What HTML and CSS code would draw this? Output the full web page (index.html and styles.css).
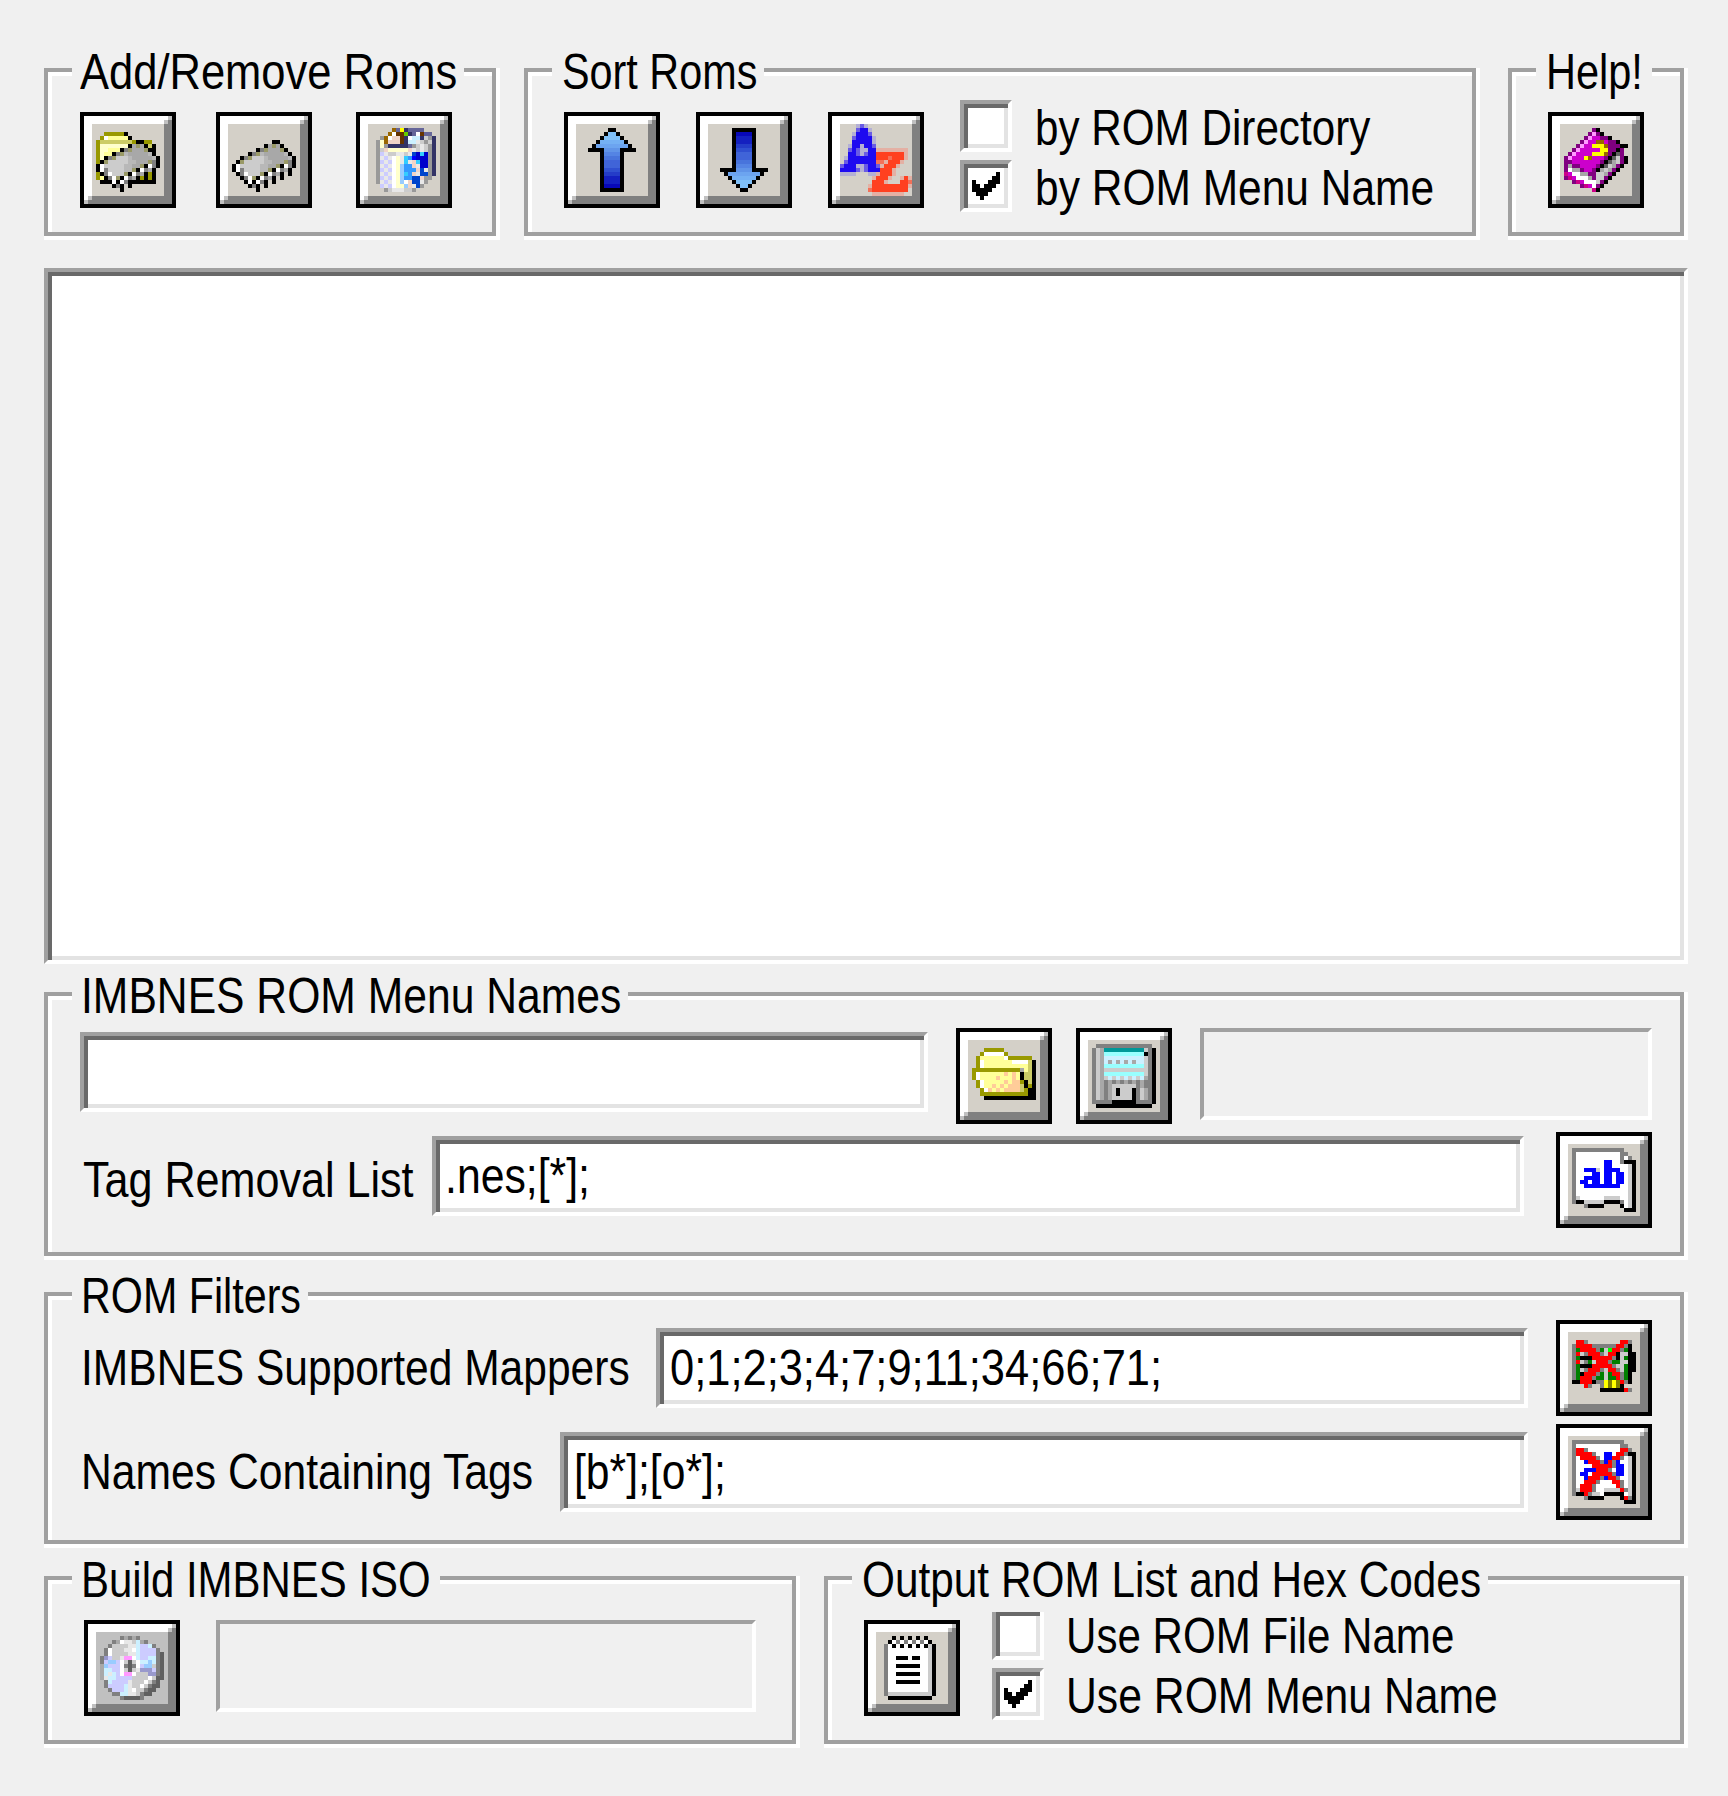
FILE: index.html
```html
<!DOCTYPE html>
<html lang="en">
<head>
<meta charset="utf-8">
<title>IMBNES ROM Builder</title>
<link rel="stylesheet" href="styles.css">
</head>
<body>
<main class="window">
  <div class="row top-row">
    <section class="group group-add">
      <h2 class="legend legend-add"><span class="t t-add">Add/Remove Roms</span></h2>
      <div class="tools tools-add">
        <button class="btn"><svg data-icon="folderChip"></svg></button>
        <button class="btn"><svg data-icon="chip"></svg></button>
        <button class="btn"><svg data-icon="trash"></svg></button>
      </div>
    </section>
    <section class="group group-sort">
      <h2 class="legend legend-sort"><span class="t t-sort">Sort Roms</span></h2>
      <div class="tools tools-sort">
        <button class="btn"><svg data-icon="up"></svg></button>
        <button class="btn"><svg data-icon="down"></svg></button>
        <button class="btn"><svg data-icon="az"></svg></button>
        <div class="checks">
          <label class="check"><span class="box"></span><span class="t t-dir">by ROM Directory</span></label>
          <label class="check"><span class="box"><svg class="tick" viewBox="0 0 7 7"><path d="M6 0h1v3h-1v1h-1v1h-1v1h-1v1h-1v-1h-1v-1h-1v-3h1v1h1v1h1v-1h1v-1h1v-1h1z"/></svg></span><span class="t t-menu">by ROM Menu Name</span></label>
        </div>
      </div>
    </section>
    <section class="group group-help">
      <h2 class="legend legend-help"><span class="t t-help">Help!</span></h2>
      <div class="tools">
        <button class="btn"><svg data-icon="book"></svg></button>
      </div>
    </section>
  </div>

  <div class="list sunken"></div>

  <section class="group group-names">
    <h2 class="legend legend-names"><span class="t t-names">IMBNES ROM Menu Names</span></h2>
    <div class="line line-name">
      <div class="field field-name sunken"></div>
      <button class="btn"><svg data-icon="folder"></svg></button>
      <button class="btn btn-save"><svg data-icon="disk"></svg></button>
      <div class="status status-name"></div>
    </div>
    <div class="line line-tag">
      <div class="label label-tag"><span class="t t-tag">Tag Removal List</span></div>
      <div class="field field-tag sunken"><span class="t t-f1">.nes;[*];</span></div>
      <button class="btn"><svg data-icon="ab"></svg></button>
    </div>
  </section>

  <section class="group group-filters">
    <h2 class="legend legend-filters"><span class="t t-filters">ROM Filters</span></h2>
    <div class="line">
      <div class="label label-mappers"><span class="t t-mappers">IMBNES Supported Mappers</span></div>
      <div class="field sunken"><span class="t t-f2">0;1;2;3;4;7;9;11;34;66;71;</span></div>
      <button class="btn"><svg data-icon="board"></svg></button>
    </div>
    <div class="line">
      <div class="label label-tags"><span class="t t-tags">Names Containing Tags</span></div>
      <div class="field sunken"><span class="t t-f3">[b*];[o*];</span></div>
      <button class="btn"><svg data-icon="abx"></svg></button>
    </div>
  </section>

  <div class="row bottom-row">
    <section class="group group-build">
      <h2 class="legend legend-build"><span class="t t-build">Build IMBNES ISO</span></h2>
      <div class="tools tools-build">
        <button class="btn"><svg data-icon="cd" data-face="#c0c0c0"></svg></button>
        <div class="status status-build"></div>
      </div>
    </section>
    <section class="group group-output">
      <h2 class="legend legend-output"><span class="t t-output">Output ROM List and Hex Codes</span></h2>
      <div class="tools tools-output">
        <button class="btn"><svg data-icon="notepad"></svg></button>
        <div class="checks">
          <label class="check"><span class="box box-cut"></span><span class="t t-file">Use ROM File Name</span></label>
          <label class="check"><span class="box"><svg class="tick" viewBox="0 0 7 7"><path d="M6 0h1v3h-1v1h-1v1h-1v1h-1v1h-1v-1h-1v-1h-1v-3h1v1h1v1h1v-1h1v-1h1v-1h1z"/></svg></span><span class="t t-usemenu">Use ROM Menu Name</span></label>
        </div>
      </div>
    </section>
  </div>
</main>
<script src="icons.js"></script>
</body>
</html>
```
FILE: styles.css
```css
* { box-sizing: border-box; }
body { margin: 0; background: #f0f0f0; color: #000; }
.window {
  width: 1728px; height: 1796px; padding: 68px 40px 0 44px; background: #f0f0f0;
  font-family: "Liberation Sans", Arial, sans-serif;
  font-size: 50px; line-height: 48px; overflow: hidden;
}

/* condensed captions */
.t { display: block; width: max-content; white-space: nowrap; transform-origin: 0 0; }
.t-add { transform: scaleX(.87); }
.t-sort { transform: scaleX(.827); }
.t-help { transform: scaleX(.83); }
.t-dir { transform: scaleX(.844); }
.t-menu { transform: scaleX(.85); }
.t-names { transform: scaleX(.853); }
.t-tag { transform: scaleX(.862); }
.t-f1 { transform: scaleX(.855); }
.t-filters { transform: scaleX(.825); }
.t-mappers { transform: scaleX(.851); }
.t-f2 { transform: scaleX(.869); }
.t-tags { transform: scaleX(.853); }
.t-f3 { transform: scaleX(.853); }
.t-build { transform: scaleX(.839); }
.t-output { transform: scaleX(.847); }
.t-file { transform: scaleX(.842); }
.t-usemenu { transform: scaleX(.854); }

.row { display: flex; }

/* etched group frame */
.group {
  border: 4px solid #a0a0a0;
  box-shadow: 4px 0 #fff, 0 4px #fff, 4px 4px #fff, inset 4px 4px #fff;
}
.legend {
  margin: -24px 0 0 24px; height: 44px; padding-left: 9px;
  background: #f0f0f0; font-size: inherit; font-weight: 400;
}
.top-row { gap: 28px; height: 168px; }
.group-add { flex: none; width: 452px; }
.group-sort { flex: none; width: 952px; }
.group-help { flex: none; width: 176px; margin-left: 4px; }
.legend-add { width: 392px; padding-left: 8px; }
.legend-sort { width: 212px; padding-left: 10px; }
.legend-help { width: 116px; padding-left: 10px; }
.legend-names { width: 556px; }
.legend-filters { width: 236px; }
.legend-build { width: 368px; }
.legend-output { width: 636px; padding-left: 10px; }

.tools { display: flex; padding: 20px 0 0 36px; }
.tools-add { padding-left: 32px; gap: 40px; }
.tools-add .btn:last-child { margin-left: 4px; }
.tools-sort { gap: 36px; }
.tools-build { gap: 36px; }
.tools-output { gap: 32px; }

.btn { flex: none; width: 96px; height: 96px; padding: 0; border: 0; background: none; }
.btn svg { display: block; width: 96px; height: 96px; }

.checks { display: flex; flex-direction: column; gap: 8px; margin-top: -12px; }
.check { display: flex; gap: 23px; height: 52px; }
.tools-output .check { gap: 22px; }
.check .t { margin-top: 4px; }
.box {
  flex: none; width: 52px; height: 52px; padding: 4px; background: #fff;
  border: 4px solid; border-color: #a0a0a0 #fff #fff #a0a0a0;
  box-shadow: inset 4px 4px #696969, inset -4px -4px #e3e3e3;
}
.box-cut { clip-path: inset(4px 0 0 0); }
.tick { display: block; width: 28px; height: 28px; margin: 4px 0 0 4px; }

.sunken {
  border: 4px solid; border-color: #a0a0a0 #fff #fff #a0a0a0; background: #fff;
  box-shadow: inset 4px 4px #696969, inset -4px -4px #e3e3e3;
}
.list { width: 1644px; height: 696px; margin-top: 32px; }

.group-names { width: 1640px; height: 264px; margin-top: 28px; }
.group-filters { width: 1640px; height: 252px; margin-top: 36px; }
.line { display: flex; height: 96px; margin-bottom: 8px; padding: 0 28px 0 32px; }
.line-name { margin-top: 12px; }
.group-filters .legend { margin-bottom: 4px; }
.field { flex: 1; height: 80px; margin: 8px 28px 0 0; padding: 0 0 0 10px; line-height: 72px; }
.line-name .field, .line-tag .field { margin-top: 4px; }
.line-name .field-name { flex: none; width: 848px; }
.line-tag .field { margin-right: 32px; padding-left: 9px; }
.btn-save { margin-left: 24px; }
.label { flex: none; margin-top: 24px; padding-left: 1px; }
.label-tag { width: 352px; padding-left: 3px; }
.label-mappers { width: 576px; }
.label-tags { width: 480px; }
.status { border: 4px solid; border-color: #a0a0a0 #fff #fff #a0a0a0; height: 92px; }
.status-name { flex: 1; margin-left: 28px; }
.status-build { width: 540px; }

.bottom-row { margin-top: 32px; gap: 28px; height: 168px; }
.group-build { flex: none; width: 752px; }
.group-output { flex: none; width: 860px; }
```
FILE: icons.js
```js
// Toolbar icons as pixel maps. Each icon is 18x18 cells on a 24x24 button.
const palette = {
  K: '#000', w: '#fff', e: '#e8e8e8', l: '#ccc', m: '#b8b8b8', g: '#a8a8a8', d: '#808080', D: '#606060',
  o: '#999966', O: '#999900', c: '#cccc66', y: '#ffff99', Y: '#ffffcc', n: '#333366', s: '#9999cc',
  b: '#996600', B: '#663300', G: '#66cc00', p: '#f0d4c8', v: '#ccccff', a: '#3399ff', L: '#99ccff',
  C: '#33ccff', u: '#0000cc', U: '#0000ff', r: '#ff0000', F: '#008000', t: '#009999', T: '#99ffff',
  q: '#ccf0ff', P: '#cc00cc', M: '#800080', Q: '#ff99ff', R: '#cc0088', z: '#ffcc99', f: '#0044cc',
  x: '#ffff00', X: '#808000', Z: '#00ff00', S: '#666699', k: '#999999',
  h: '#1e0af0', i: '#6a5ce4', j: '#b4b0d4', H: '#ff4020', I: '#f47058', J: '#e4b0a4',
  0: '#80c0f8', 1: '#74b0f4', 2: '#6ca4f0', 3: '#6094e8', 4: '#5484e4', 5: '#4874dc', 6: '#4064d8',
  7: '#3050d0', 8: '#243cc8', 9: '#1420c0', A: '#0808b8'
};

const chip = [7,
  '...........KK.....',
  '.........KgogK....',
  '.......KdogggoK...',
  '.....KdomgggggmK..',
  '...KdolllmgggggmK.',
  '..KolllllmmgggodK.',
  '.KwlllllmmggoKwdK.',
  '.KwdllllmmoKwdgK..',
  '..KdwllloKwdgK.K..',
  '...KdwoKwdgK.K....',
  '....KwKwdK.K......',
  '.....KdK.K........',
  '.......K..........'];

const folderBack = [5,
  '...OOOOOK.........',
  '..OwyyyyyK........',
  '.OccccccccOKKOO...',
  '.OYYYYYYYcOOKccK..',
  '.OYYyyyyyyyyyycK..',
  '.OYyyyyyyyyyyycK..',
  '.OYyyyyyyyyyyycK..',
  '.OYyyyyyyyyyyycK..',
  '.OYyyyyyyyyyyycK..',
  '.OyyyyyyyyycOcOK..',
  '.OyyyyyyyyycOcOK..',
  '.OyyyyyyyyycOcOK..',
  '..KKKKKKKKKKKKKK..'];

const icons = {
  chip: [chip],
  folderChip: [folderBack, chip],
  trash: [[4,
    '......bSxnSSSS....',
    '.....bwBBGnSwBSS..',
    '...kbwppBnwqqnlkn.',
    '..kYbpppBnqqelkln.',
    '..kYknnnnnSklelkn.',
    '..klpYYYYYpelelkn.',
    '..kvelleelefuCukn.',
    '..kevewYeCaUuuukn.',
    '..kvevwYeCepCuukn.',
    '..kevewYLaapeuukn.',
    '..kvevwYLaaapfekn.',
    '..kevewYLCapeffkn.',
    '..kvevwYLaaffpkk..',
    '..kevewYLwpffek...',
    '...vevwYYLpefk....',
    '....kleeellk......']],
  up: [[4,
    '........KK........',
    '.......K00K.......',
    '......K0000K......',
    '.....K111111K.....',
    '....K22222222K....',
    '...KKKK3333KKKK...',
    '......K4444K......',
    '......K5555K......',
    '......K6666K......',
    '......K6666K......',
    '......K7777K......',
    '......K8888K......',
    '......K9999K......',
    '......K9999K......',
    '......KAAAAK......',
    '......KKKKKK......']],
  down: [[4,
    '......KKKKKK......',
    '......KAAAAK......',
    '......K9999K......',
    '......K9999K......',
    '......K8888K......',
    '......K7777K......',
    '......K6666K......',
    '......K6666K......',
    '......K5555K......',
    '......K4444K......',
    '...KKKK3333KKKK...',
    '....K22222222K....',
    '.....K111111K.....',
    '......K0000K......',
    '.......K00K.......',
    '........KK........']],
  az: [[3,
    '....jij...........',
    '....ihhj..........',
    '...jhhhi..........',
    '...ihhhhj.........',
    '...hhhhhj.........',
    '..jhhjhhi.........',
    '..ihijjhhJJJJJJJJ.',
    '..hhijihhHHHHHHHJ.',
    '.jhhhhhhhHHHIHHHJ.',
    '.ihhhhhhhIIJHHHJ..',
    'ihhhjjihhiJHHHJ...',
    'hhhhijihhhHHHJ....',
    'jjjj...jjJHHHJ....',
    '........JHHHJ..JHJ',
    '........HHHJ...HHI',
    '.......JHHHHHHHHHJ',
    '.......IHHHHHHHHH.',
    '........JJJJJJJJ..']],
  book: [[4,
    '........MK........',
    '.......MQMK.......',
    '......MQPPMMK.....',
    '.....MQPPbbPMMK...',
    '....MQPPxxxbMMMKK.',
    '...MQPPPPPxxMMKM..',
    '..MQPPPPxxxbMKDM..',
    '.MQPPPxbPPPMKDlMK.',
    '.MMPPPPPPPMKDglMK.',
    '.MgMMPPPPMKDlgMK..',
    '.MwggMPPMKglgMK...',
    '.RPwwggMMllgMK....',
    '.MRPwwwgMllMK.....',
    '...MRPwwwlMK......',
    '.....MRPwMK.......',
    '........RK........']],
  folder: [[5,
    '....OOOOO.........',
    '...OwwwwwO........',
    '..OyyyyyywOOOOOO..',
    '..OwyyyyyyywwwwcK.',
    '..OwyyyyyyyyyyycK.',
    '.OOOOOOOOOOOOgycK.',
    '.OwyyyyyyzyzyKccK.',
    '.OwyyyyzyyyzyKccK.',
    '..OwyyyyyzyzzOKcK.',
    '..OwyyzyzyzzzcKOK.',
    '...OwzyzyzzzzcOKK.',
    '...OOOOOOOOOOOOKK.',
    '....KKKKKKKKKKKKK.']],
  disk: [[4,
    '..dddddddddddddd..',
    '.dlgttttttttttldK.',
    '.dlgTTTTTTTTTTKdK.',
    '.dlgqqqqqqqqqqldK.',
    '.dlgqgqgqgqgqqldK.',
    '.dlgTTTTTTTTTTldK.',
    '.dlgllllllllllldK.',
    '.dlgTTTTTTTTTTldK.',
    '.dlglqlqlqlqlqgdK.',
    '.dlgdgdgdgdgdgddK.',
    '.dlgdglllllldgddK.',
    '.dlgdglKlllKdlgdK.',
    '.dlgdglKlllKdlgdK.',
    '.dlgdglllllKdlgdK.',
    '.dddddKKKKKKddddK.',
    '..KKKKKKKKKKKKKK..']],
  ab: [[4,
    '.ddddddddddddd....',
    '.dwwwwwwwwwwwdd...',
    '.dwwwwwwwwwwwdwd..',
    '.dwwwwwwwUUwwdKKK.',
    '.dwwwwwwwUUwwwwlK.',
    '.dwwUUUlwUUUUwwlK.',
    '.dwwwwUUwUUwUUwlK.',
    '.dwwUUUUwUUwUUwlK.',
    '.dwUUwUUwUUwUUwlK.',
    '.dwwUUUUUUUUUwwlK.',
    '.dwwwwwwwwwwwwwlK.',
    '.dwwwwwwwwwwwwwlK.',
    '.dlwwwwwwllllwwlK.',
    '.dKKlllllKKKKdwlK.',
    '....dKKKK....KwlK.',
    '..............KKK.']],
  board: [[5,
    '..rrd........rrd..',
    '.drrrrddddddrrdK..',
    '.dFrrrrdFlZrrdFK..',
    '.drldrrrdlrrKllKK.',
    '.dFKKKrrrrrdKlFKK.',
    '.drldFlrrrdFFllKK.',
    '.dFKKKrrrrrdllFKK.',
    '.dFldrrrdlrrdlFKK.',
    '.dFKrrrdFlFrrdFK..',
    '.dFrrrdFFlFFrdFK..',
    '.KKrrrKddxXxXrdK..',
    '....rd..dxXxXK....',
    '........KKKKKKrd..']],
  abx: [[4,
    '.ddddddddddddd....',
    '.dwwwwwwwwwwwdd...',
    '.drrdwwwwwwwwrrd..',
    '.drrrrdwwUUwrrdKK.',
    '.dwrrrrdwUUrrdwlK.',
    '.dwwUrrrdUrdUwwlK.',
    '.dwwwwrrrrrdUUwlK.',
    '.dwwUUUrrrdwUUwlK.',
    '.dwUUwrrrrrdUUwlK.',
    '.dwwUrrrdUrrdwwlK.',
    '.dwwrrrdwwwrrdwlK.',
    '.dwrrrdwwwwwrdwlK.',
    '.dlrrrdwwllllrdlK.',
    '.dKKrdllwKKKKKwlK.',
    '....dKKKK....KrdK.',
    '..............KKK.']],
  cd: [[4,
    '......dgdgd.......',
    '....dgweelqgd.....',
    '...dlllleeqvvqd...',
    '..dwllleewqvvvvd..',
    '..dwlllleeqvvvvdD.',
    '.dsvlleQQwqvvqqdD.',
    '.dvLLvwlDlwqqLqdD.',
    '.gLvvvwdDdwvLLldD.',
    '.gqqvvwlDlesssvdD.',
    '.gqeqvwQQwlllssdD.',
    '.geqqvvvvllllwlDD.',
    '..dqvvvvelllwldD..',
    '..dvvvvqellwldDD..',
    '...dvvvqewlldDD...',
    '....ddqqeeldDD....',
    '......dDDDDd......']],
  notepad: [[4,
    '....K.K.K.K.K.....',
    '...KwdwdwdwdwK....',
    '..dwKwKwKwKwKlK...',
    '..dwwwwwwwwwwlK...',
    '..dwwwwwwwwwwlK...',
    '..dwwKKKwKKwwlK...',
    '..dwwwwwwwwwwlK...',
    '..dwwKKKKKKwwlK...',
    '..dwwwwwwwwwwlK...',
    '..dwwKKKKKKwwlK...',
    '..dwwwwwwwwwwlK...',
    '..dwwKKKKKKwwlK...',
    '..dwwwwwwwwwwlK...',
    '..dwwwwwwwwwwlK...',
    '..dlllllllllllK...',
    '...KKKKKKKKKKK....']]
};

const rect = (x, y, w, h, fill) => `<rect x="${x}" y="${y}" width="${w}" height="${h}" fill="${fill}"/>`;

function frame(face) {
  return rect(0, 0, 24, 24, '#000') + rect(1, 1, 22, 22, '#808080') +
    rect(1, 1, 21, 1, '#fff') + rect(1, 2, 20, 1, '#fff') +
    rect(1, 1, 1, 21, '#fff') + rect(2, 1, 1, 20, '#fff') +
    rect(22, 1, 1, 1, '#c0c0c0') + rect(21, 2, 1, 1, '#c0c0c0') +
    rect(2, 21, 1, 1, '#c0c0c0') + rect(1, 22, 1, 1, '#c0c0c0') +
    rect(3, 3, 18, 18, face);
}

function layer([top, ...rows]) {
  let out = '';
  rows.forEach((row, r) => {
    for (const run of row.matchAll(/([^.])\1*/g)) {
      out += rect(run.index + 3, top + r, run[0].length, 1, palette[run[1]]);
    }
  });
  return out;
}

document.querySelectorAll('svg[data-icon]').forEach(svg => {
  svg.setAttribute('viewBox', '0 0 24 24');
  svg.setAttribute('shape-rendering', 'crispEdges');
  svg.innerHTML = frame(svg.dataset.face || '#d4d0c8') + icons[svg.dataset.icon].map(layer).join('');
});
```
